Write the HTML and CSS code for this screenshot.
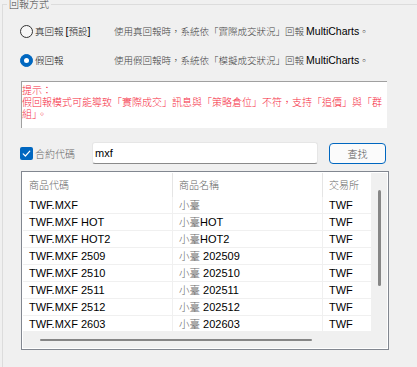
FILE: index.html
```html
<!DOCTYPE html>
<html lang="zh-Hant">
<head>
<meta charset="utf-8">
<title>回報方式</title>
<link rel="stylesheet" href="styles.css">
</head>
<body>
<fieldset class="group">
  <legend class="group-title">回報方式</legend>
  <div class="group-body">
    <div class="opt">
      <span class="radio"></span>
      <span class="opt-label">真回報 <span class="en">[</span>預設<span class="en">]</span></span>
      <span class="opt-desc">使用真回報時，系統依「實際成交狀況」回報 <span class="en">MultiCharts</span>。</span>
    </div>
    <div class="opt">
      <span class="radio checked"></span>
      <span class="opt-label">假回報</span>
      <span class="opt-desc">使用假回報時，系統依「模擬成交狀況」回報 <span class="en">MultiCharts</span>。</span>
    </div>
    <div class="hint">提示：<br>假回報模式可能導致「實際成交」訊息與「策略倉位」不符，支持「追價」與「群<br>組」。</div>
    <div class="search">
      <span class="check"><svg width="13" height="13" viewBox="0 0 13 13"><polyline points="3.2,6.8 5.4,9 9.8,4.2" fill="none" stroke="#fff" stroke-width="1.2" stroke-linecap="round" stroke-linejoin="round"/></svg></span>
      <span class="check-label">合約代碼</span>
      <div class="input"><span class="input-text">mxf</span></div>
      <button class="btn">查找</button>
    </div>
    <div class="list">
      <div class="list-main">
        <div class="lv-row lv-head">
          <div class="lv-cell">商品代碼</div>
          <div class="lv-cell">商品名稱</div>
          <div class="lv-cell">交易所</div>
        </div>
        <div class="lv-row"><div class="lv-cell">TWF.MXF</div><div class="lv-cell"><span class="cj">小臺</span></div><div class="lv-cell">TWF</div></div>
        <div class="lv-row"><div class="lv-cell">TWF.MXF HOT</div><div class="lv-cell"><span class="cj">小臺</span>HOT</div><div class="lv-cell">TWF</div></div>
        <div class="lv-row"><div class="lv-cell">TWF.MXF HOT2</div><div class="lv-cell"><span class="cj">小臺</span>HOT2</div><div class="lv-cell">TWF</div></div>
        <div class="lv-row"><div class="lv-cell">TWF.MXF 2509</div><div class="lv-cell"><span class="cj">小臺</span> 202509</div><div class="lv-cell">TWF</div></div>
        <div class="lv-row"><div class="lv-cell">TWF.MXF 2510</div><div class="lv-cell"><span class="cj">小臺</span> 202510</div><div class="lv-cell">TWF</div></div>
        <div class="lv-row"><div class="lv-cell">TWF.MXF 2511</div><div class="lv-cell"><span class="cj">小臺</span> 202511</div><div class="lv-cell">TWF</div></div>
        <div class="lv-row"><div class="lv-cell">TWF.MXF 2512</div><div class="lv-cell"><span class="cj">小臺</span> 202512</div><div class="lv-cell">TWF</div></div>
        <div class="lv-row"><div class="lv-cell">TWF.MXF 2603</div><div class="lv-cell"><span class="cj">小臺</span> 202603</div><div class="lv-cell">TWF</div></div>
      </div>
      <div class="vscroll"><div class="vthumb"></div></div>
      <div class="hscroll"><div class="hthumb"></div></div>
      <div class="corner"></div>
    </div>
  </div>
</fieldset>
</body>
</html>
```
FILE: styles.css
```css
* { box-sizing: border-box; }
html, body { margin: 0; padding: 0; }
body {
  width: 417px;
  height: 367px;
  overflow: hidden;
  background: #f0f0f0;
  font-family: "Noto Sans CJK TC", "Noto Sans CJK SC", sans-serif;
  font-weight: 300;
  font-size: 10px;
  color: #333;
}
.en {
  font-family: "Liberation Sans", Arial, sans-serif;
  font-weight: 400;
  font-size: 10.5px;
  color: #000;
}
.group {
  margin: -2px 0 0 2px;
  padding: 0;
  min-width: 0;
  min-height: 369px;
  border: 1px solid #dcdcdc;
  border-right: 0;
  border-bottom: 0;
}
.group-title {
  margin-left: 4px;
  padding: 0 2px;
  line-height: 12px;
  color: #444;
}
.group-body {
  padding: 13px 0 0 18px;
  display: flex;
  flex-direction: column;
  align-items: flex-start;
}
.opt {
  display: flex;
  align-items: center;
  height: 16px;
  line-height: 16px;
  font-size: 9.5px;
}
.opt + .opt { margin-top: 13px; }
.radio {
  width: 13px;
  height: 13px;
  margin-left: -1px;
  border: 1px solid #333;
  border-radius: 50%;
  background: #f7f7f7;
  display: flex;
  align-items: center;
  justify-content: center;
}
.radio.checked {
  background: #0067c0;
  border-color: #0067c0;
}
.radio.checked::after {
  content: "";
  width: 5px;
  height: 5px;
  border-radius: 50%;
  background: #fff;
}
.opt-label {
  width: 79px;
  margin-left: 2px;
  color: #222;
  white-space: nowrap;
}
.opt-desc { color: #444; white-space: nowrap; }
.hint {
  margin-top: 13px;
  width: 366px;
  height: 47px;
  padding: 2px 0 0 0;
  background: #fff;
  border-top: 1px solid #a0a0a0;
  border-left: 1px solid #a0a0a0;
  color: #f5283c;
  line-height: 12px;
  white-space: nowrap;
}
.search {
  margin-top: 14px;
  height: 22px;
  display: flex;
  align-items: center;
}
.check {
  width: 13px;
  height: 13px;
  margin-left: -1px;
  border-radius: 2px;
  background: #0067c0;
  display: flex;
}
.check-label {
  width: 57px;
  margin-left: 2px;
  color: #666;
}
.input {
  width: 226px;
  height: 22px;
  background: #fff;
  border: 1px solid #e6e6e6;
  border-bottom-color: #8a8a8a;
  border-radius: 3px;
  padding-left: 2px;
  display: flex;
  align-items: center;
}
.input-text {
  font-family: "Liberation Sans", Arial, sans-serif;
  font-weight: 400;
  font-size: 11px;
  color: #000;
}
.btn {
  width: 57px;
  height: 21px;
  margin-left: 11px;
  padding: 0;
  background: #fbfbfb;
  border: 1px solid #0067c0;
  border-radius: 4px;
  font-family: inherit;
  font-weight: 300;
  font-size: 10px;
  color: #555;
}
.list {
  margin-top: 7px;
  width: 368px;
  height: 179px;
  padding: 1px;
  background: #fff;
  border: 1px solid #828790;
  display: grid;
  grid-template-columns: 348px 16px;
  grid-template-rows: 158px 17px;
}
.list-main {
  overflow: hidden;
  background: #fff;
  border-bottom-right-radius: 3px;
}
.lv-row {
  display: grid;
  grid-template-columns: 150px 150px 150px;
  height: 17px;
  border-bottom: 1px solid #f0f0f0;
}
.lv-cell {
  padding-left: 6px;
  border-right: 1px solid #f0f0f0;
  font-family: "Liberation Sans", Arial, sans-serif;
  font-weight: 400;
  font-size: 11px;
  line-height: 16px;
  color: #000;
  white-space: nowrap;
  overflow: hidden;
}
.lv-head {
  height: 24px;
  border-bottom: 0;
}
.lv-head .lv-cell {
  font-family: "Noto Sans CJK TC", "Noto Sans CJK SC", sans-serif;
  font-weight: 300;
  font-size: 10px;
  line-height: 24px;
  color: #666;
  border-right-color: #e5e5e5;
}
.cj {
  font-family: "Noto Sans CJK TC", "Noto Sans CJK SC", sans-serif;
  font-weight: 300;
  font-size: 10.5px;
  color: #6a6a6a;
}
.vscroll {
  background: #f0f0f0;
  padding: 17px 0 0 7px;
}
.vthumb {
  width: 3px;
  height: 96px;
  border-radius: 2px;
  background: #868686;
}
.hscroll {
  background: #f0f0f0;
  padding: 8px 0 0 17px;
}
.hthumb {
  width: 272px;
  height: 2px;
  border-radius: 1px;
  background: #868686;
}
.corner { background: #f0f0f0; }
```
